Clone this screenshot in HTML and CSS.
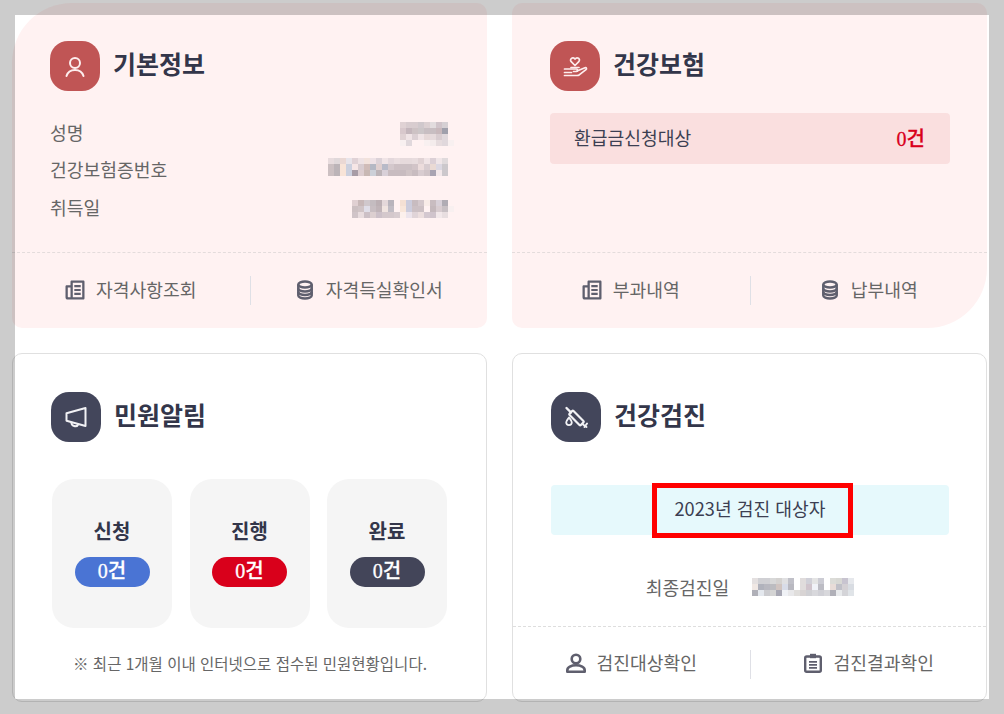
FILE: index.html
```html
<!DOCTYPE html>
<html lang="ko">
<head>
    <meta charset="UTF-8">
    <meta name="viewport" content="width=device-width, initial-scale=1.0">
    <title>나의 건강정보</title>
    <link rel="stylesheet" href="styles.css">
</head>
<body>
    <main class="cards">
        <!-- 기본정보 -->
        <section class="card card-pink card-info">
            <div class="card-body">
                <div class="card-head">
                    <span class="head-icon icon-red">
                        <svg viewBox="0 0 50 50" fill="none" stroke="#fdeeee" stroke-width="2" stroke-linecap="round">
                            <circle cx="25" cy="22" r="5"/>
                            <path d="M16.500 35c1.200-3.900 4.500-6 8.500-6s7.300 2.100 8.500 6"/>
                        </svg>
                    </span>
                    <h2>기본정보</h2>
                </div>
                <dl class="info-list">
                    <div class="info-row">
                        <dt>성명</dt>
                        <dd class="low">
                            <svg class="mosaic" width="54" height="24" viewBox="0 0 9 4">
                                <rect x="0" y="0" fill="#e0d2d4"/><rect x="1" y="0" fill="#d8cccf"/><rect x="2" y="0" fill="#d8cccf"/><rect x="3" y="0" fill="#d0c8cc"/><rect x="4" y="0" fill="#dcd0d2"/><rect x="5" y="0" fill="#e2dcde"/><rect x="6" y="0" fill="#d0c4ca"/><rect x="7" y="0" fill="#d6d0d4"/>
                                <rect x="0" y="1" fill="#d8c8cc"/><rect x="1" y="1" fill="#c4b6bc"/><rect x="2" y="1" fill="#cdc2c4"/><rect x="3" y="1" fill="#ccc6c8"/><rect x="4" y="1" fill="#c8bec2"/><rect x="5" y="1" fill="#c8bec2"/><rect x="6" y="1" fill="#c8b8bc"/><rect x="7" y="1" fill="#a0a0ac"/>
                                <rect x="0" y="2" fill="#e0d2d4"/><rect x="1" y="2" fill="#f0e4e6"/><rect x="2" y="2" fill="#dcd0d4"/><rect x="3" y="2" fill="#f0e4e6"/><rect x="4" y="2" fill="#e6d8d8"/><rect x="5" y="2" fill="#e6dadc"/><rect x="6" y="2" fill="#d8ccd0"/><rect x="7" y="2" fill="#e0d8dc"/>
                                <rect x="0" y="3" fill="#f8f0f0"/><rect x="1" y="3" fill="#e0d8dc"/><rect x="4" y="3" fill="#f8f0f0"/><rect x="5" y="3" fill="#f4ecec"/><rect x="6" y="3" fill="#e6dcde"/><rect x="7" y="3" fill="#e0d8dc"/><rect x="8" y="3" fill="#f8f0f0"/>
                            </svg>
                        </dd>
                    </div>
                    <div class="info-row">
                        <dt>건강보험증번호</dt>
                        <dd class="high">
                            <svg class="mosaic" width="126" height="18" viewBox="0 0 21 3">
                                <rect x="0" y="0" fill="#e8dcde"/><rect x="1" y="0" fill="#e0d8da"/><rect x="2" y="0" fill="#ead8d4"/><rect x="3" y="0" fill="#e8e4ea"/><rect x="4" y="0" fill="#e0d2d6"/><rect x="5" y="0" fill="#eee2e4"/><rect x="6" y="0" fill="#f2e2dc"/><rect x="7" y="0" fill="#eee2e6"/><rect x="8" y="0" fill="#dcd2d8"/><rect x="9" y="0" fill="#f0e4e6"/><rect x="10" y="0" fill="#e4d8dc"/><rect x="11" y="0" fill="#eadee0"/><rect x="12" y="0" fill="#e6dadc"/><rect x="13" y="0" fill="#e6dadc"/><rect x="14" y="0" fill="#e8dcde"/><rect x="15" y="0" fill="#e0d2d4"/><rect x="16" y="0" fill="#f0e4e6"/><rect x="17" y="0" fill="#dcd0d6"/><rect x="18" y="0" fill="#f0e6e8"/><rect x="19" y="0" fill="#e0dadc"/>
                                <rect x="0" y="1" fill="#ccc0c2"/><rect x="1" y="1" fill="#bcb4b8"/><rect x="2" y="1" fill="#f8e4d8"/><rect x="3" y="1" fill="#ccd0de"/><rect x="4" y="1" fill="#f6e6e6"/><rect x="5" y="1" fill="#d8ccd0"/><rect x="6" y="1" fill="#d0bcb8"/><rect x="7" y="1" fill="#b4b8c4"/><rect x="8" y="1" fill="#dfcfcf"/><rect x="9" y="1" fill="#b8bac8"/><rect x="10" y="1" fill="#d4c8cc"/><rect x="11" y="1" fill="#cdc0c4"/><rect x="12" y="1" fill="#ccc0c4"/><rect x="13" y="1" fill="#ccc0c4"/><rect x="14" y="1" fill="#d2c4c8"/><rect x="15" y="1" fill="#ecdcdc"/><rect x="16" y="1" fill="#d8ccd0"/><rect x="17" y="1" fill="#eadad4"/><rect x="18" y="1" fill="#dcd8e2"/><rect x="19" y="1" fill="#ccc8cc"/>
                                <rect x="0" y="2" fill="#ccc0c2"/><rect x="1" y="2" fill="#bcb4b8"/><rect x="2" y="2" fill="#f8e4d8"/><rect x="3" y="2" fill="#ccd0de"/><rect x="4" y="2" fill="#a89ca6"/><rect x="5" y="2" fill="#dccdd0"/><rect x="6" y="2" fill="#c8b8b4"/><rect x="7" y="2" fill="#ccd0d8"/><rect x="8" y="2" fill="#bcb4b8"/><rect x="9" y="2" fill="#d8d0d8"/><rect x="10" y="2" fill="#c8bcc0"/><rect x="11" y="2" fill="#c8bcc0"/><rect x="12" y="2" fill="#c8bcc0"/><rect x="13" y="2" fill="#d0c4c6"/><rect x="14" y="2" fill="#c8bcc0"/><rect x="15" y="2" fill="#d8ccd0"/><rect x="16" y="2" fill="#d0c4c8"/><rect x="17" y="2" fill="#a8a4b2"/><rect x="18" y="2" fill="#f2e8ea"/><rect x="19" y="2" fill="#ccc8cc"/>
                            </svg>
                        </dd>
                    </div>
                    <div class="info-row">
                        <dt>취득일</dt>
                        <dd class="low">
                            <svg class="mosaic" width="102" height="18" viewBox="0 0 17 3">
                                <rect x="0" y="0" fill="#e0d0d2"/><rect x="1" y="0" fill="#c8b8b8"/><rect x="2" y="0" fill="#d0c8cc"/><rect x="3" y="0" fill="#c4bcc0"/><rect x="4" y="0" fill="#bcb0b4"/><rect x="5" y="0" fill="#e4d8da"/><rect x="6" y="0" fill="#b8b4bc"/><rect x="8" y="0" fill="#f4e0d4"/><rect x="9" y="0" fill="#ccccdc"/><rect x="10" y="0" fill="#c8bcc0"/><rect x="11" y="0" fill="#d4c8cc"/><rect x="12" y="0" fill="#f8ece8"/><rect x="13" y="0" fill="#c8bcc0"/><rect x="14" y="0" fill="#d8d0d8"/><rect x="15" y="0" fill="#b0acb4"/>
                                <rect x="0" y="1" fill="#ccc0c2"/><rect x="1" y="1" fill="#d0c4c6"/><rect x="2" y="1" fill="#e0dee8"/><rect x="3" y="1" fill="#c8bec2"/><rect x="4" y="1" fill="#c0b4b8"/><rect x="5" y="1" fill="#f0e4e0"/><rect x="6" y="1" fill="#c0bcc4"/><rect x="8" y="1" fill="#f8e6da"/><rect x="9" y="1" fill="#ccccdc"/><rect x="10" y="1" fill="#ccc0c4"/><rect x="11" y="1" fill="#ccc0c4"/><rect x="13" y="1" fill="#c4b8bc"/><rect x="14" y="1" fill="#d8ccd0"/><rect x="15" y="1" fill="#c8c0c4"/><rect x="16" y="1" fill="#f8f0f0"/>
                                <rect x="0" y="2" fill="#d0c4c8"/><rect x="1" y="2" fill="#e8dcde"/><rect x="2" y="2" fill="#ccc0c6"/><rect x="3" y="2" fill="#dccfd0"/><rect x="4" y="2" fill="#ccc0c8"/><rect x="5" y="2" fill="#d4c8cc"/><rect x="6" y="2" fill="#d4c8cc"/><rect x="7" y="2" fill="#d8ccd0"/><rect x="8" y="2" fill="#fcf0ec"/><rect x="9" y="2" fill="#ece4ec"/><rect x="10" y="2" fill="#e0d4d8"/><rect x="11" y="2" fill="#ecdede"/><rect x="12" y="2" fill="#d4c8d0"/><rect x="13" y="2" fill="#d0c4cc"/><rect x="14" y="2" fill="#f2e8ea"/><rect x="15" y="2" fill="#e8dee0"/>
                            </svg>
                        </dd>
                    </div>
                </dl>
            </div>
            <div class="card-links">
                <a href="#">
                    <svg class="link-icon" viewBox="0 0 20 20"><use href="#ico-news"/></svg>
                    자격사항조회
                </a>
                <a href="#">
                    <svg class="link-icon" viewBox="0 0 20 20"><use href="#ico-db"/></svg>
                    자격득실확인서
                </a>
            </div>
        </section>

        <!-- 건강보험 -->
        <section class="card card-pink card-insure">
            <div class="card-body">
                <div class="card-head">
                    <span class="head-icon icon-red">
                        <svg viewBox="0 0 50 50" fill="none" stroke="#fdeeee" stroke-width="1.700" stroke-linecap="round" stroke-linejoin="round">
                            <path d="M25 24.500l-3.800-3.800c-2.200-2.500 1.700-5.500 3.800-2.600 2.100-2.900 6-.1 3.800 2.600z"/>
                            <path d="M21 26.500h8"/>
                            <path d="M14.500 28h12c1.500 0 1.500 2.500 0 2.500h-3"/>
                            <path d="M27 30l8-3.300c1.500-.4 2 1.200 1 2l-6.500 5c-.8.500-1.500.8-2.500.8H14.500"/>
                            <path d="M14.500 31.500h7"/>
                        </svg>
                    </span>
                    <h2>건강보험</h2>
                </div>
                <div class="refund-row">
                    <span>환급금신청대상</span>
                    <strong class="count">0건</strong>
                </div>
            </div>
            <div class="card-links">
                <a href="#">
                    <svg class="link-icon" viewBox="0 0 20 20"><use href="#ico-news"/></svg>
                    부과내역
                </a>
                <a href="#">
                    <svg class="link-icon" viewBox="0 0 20 20"><use href="#ico-db"/></svg>
                    납부내역
                </a>
            </div>
        </section>

        <!-- 민원알림 -->
        <section class="card card-line">
            <div class="card-body">
                <div class="card-head">
                    <span class="head-icon icon-dark">
                        <svg viewBox="0 0 50 50" fill="none" stroke="#f2f2f5" stroke-width="2" stroke-linejoin="round">
                            <path d="M34.500 16v18L15.500 28.800v-7.600z"/>
                            <path d="M20.500 30c-.6 4.300 5.300 5.800 7 2"/>
                        </svg>
                    </span>
                    <h2>민원알림</h2>
                </div>
                <div class="stat-list">
                    <div class="stat">
                        <h3>신청</h3>
                        <span class="pill count pill-blue">0건</span>
                    </div>
                    <div class="stat">
                        <h3>진행</h3>
                        <span class="pill count pill-red">0건</span>
                    </div>
                    <div class="stat">
                        <h3>완료</h3>
                        <span class="pill count pill-dark">0건</span>
                    </div>
                </div>
                <p class="stat-note">※ 최근 1개월 이내 인터넷으로 접수된 민원현황입니다.</p>
            </div>
        </section>

        <!-- 건강검진 -->
        <section class="card card-line">
            <div class="card-body">
                <div class="card-head">
                    <span class="head-icon icon-dark">
                        <svg viewBox="0 0 50 50" fill="none" stroke="#f2f2f5" stroke-linecap="round" stroke-linejoin="round">
                            <rect x="17.500" y="23.200" width="16" height="5.600" rx="1" transform="rotate(45 25.500 26)" stroke-width="2.200"/>
                            <path d="M20 20.500l-4.500-4.500" stroke-width="2.400"/>
                            <path d="M32 32.500l3.500 2.500M36 31.500l-2.500 3.500" stroke-width="2"/>
                            <path d="M18 25.500c-1.500 2-2.800 3.300-2.800 4.800a2.800 2.800 0 0 0 5.600 0c0-1.500-1.300-2.800-2.800-4.800z" stroke-width="1.800"/>
                        </svg>
                    </span>
                    <h2>건강검진</h2>
                </div>
                <div class="check-banner">
                    <span class="check-target">2023년 검진 대상자</span>
                </div>
                <div class="check-date">
                    <span>최종검진일</span>
                    <svg class="mosaic" width="102" height="18" viewBox="0 0 17 3">
                        <rect x="0" y="0" fill="#e4e0e0"/><rect x="1" y="0" fill="#d0d0d4"/><rect x="2" y="0" fill="#d0d0d4"/><rect x="3" y="0" fill="#d8d8d8"/><rect x="4" y="0" fill="#d4d2d0"/><rect x="5" y="0" fill="#e0e0e2"/><rect x="6" y="0" fill="#c0c0c8"/><rect x="8" y="0" fill="#e0dcdc"/><rect x="9" y="0" fill="#d0d0d8"/><rect x="10" y="0" fill="#e4e4e4"/><rect x="11" y="0" fill="#ccccd4"/><rect x="13" y="0" fill="#dcdcd8"/><rect x="14" y="0" fill="#d8d8d4"/><rect x="15" y="0" fill="#c8c4d0"/><rect x="16" y="0" fill="#e6e8ec"/>
                        <rect x="0" y="1" fill="#f0e8e4"/><rect x="1" y="1" fill="#b0b2bc"/><rect x="2" y="1" fill="#b8b8c0"/><rect x="3" y="1" fill="#bcbcc0"/><rect x="4" y="1" fill="#d0c4c0"/><rect x="5" y="1" fill="#d8dce8"/><rect x="6" y="1" fill="#b8b8c0"/><rect x="8" y="1" fill="#e0dcdc"/><rect x="9" y="1" fill="#d0c4cc"/><rect x="10" y="1" fill="#f0f2f8"/><rect x="11" y="1" fill="#bcbcc4"/><rect x="13" y="1" fill="#e8dcd8"/><rect x="14" y="1" fill="#c0c0c8"/><rect x="15" y="1" fill="#d4d0d4"/><rect x="16" y="1" fill="#d8dce2"/>
                        <rect x="0" y="2" fill="#b0b0b8"/><rect x="1" y="2" fill="#e4e8ee"/><rect x="2" y="2" fill="#ccccd0"/><rect x="3" y="2" fill="#d4d4d4"/><rect x="4" y="2" fill="#a8a8b4"/><rect x="5" y="2" fill="#f0f2f6"/><rect x="6" y="2" fill="#e8e8ea"/><rect x="7" y="2" fill="#e0dedc"/><rect x="8" y="2" fill="#d8d4d4"/><rect x="9" y="2" fill="#d0d0d4"/><rect x="10" y="2" fill="#d8d8dc"/><rect x="11" y="2" fill="#d0d0d6"/><rect x="12" y="2" fill="#d8d8dc"/><rect x="13" y="2" fill="#b0b0b8"/><rect x="14" y="2" fill="#e8eaec"/><rect x="15" y="2" fill="#d4d4d8"/><rect x="16" y="2" fill="#e0e4e8"/>
                    </svg>
                </div>
            </div>
            <div class="card-links">
                <a href="#">
                    <svg class="link-icon" viewBox="0 0 20 20" fill="none" stroke="#5f5f6e" stroke-width="2.600">
                        <circle cx="10" cy="6" r="4.300"/>
                        <path d="M1.300 18.700v-1.500c0-3 3.900-4.900 8.700-4.900s8.700 1.900 8.700 4.900v1.500z" stroke-linejoin="round"/>
                    </svg>
                    검진대상확인
                </a>
                <a href="#">
                    <svg class="link-icon" viewBox="0 0 20 20" fill="none" stroke="#5f5f6e" stroke-width="2.400">
                        <rect x="2.200" y="3.500" width="15.600" height="15.300" rx="1.500"/>
                        <path d="M7 .8h6v4.400H7z" fill="#5f5f6e" stroke="none"/>
                        <path d="M6 8.800h8M6 11.800h8M6 14.800h8" stroke-width="1.700"/>
                    </svg>
                    검진결과확인
                </a>
            </div>
        </section>
    </main>

    <!-- 공통 아이콘 -->
    <svg class="icon-defs" width="0" height="0">
        <symbol id="ico-news" viewBox="0 0 20 20">
            <path d="M5.500 1.800C5.500 1 6 .5 6.800.5h11.400c.8 0 1.300.5 1.300 1.300v16.400c0 .8-.5 1.300-1.300 1.300H2.800C1.300 19.500.5 18.700.5 17.200V6.500c0-.8.500-1.300 1.300-1.300h3.700z" fill="#5f5f6e"/>
            <path d="M7.800 2.800h9.400v14.400H7.800zM2.800 7.500h2.700v9.700H3.300c-.3 0-.5-.2-.5-.5z" fill="#fff2f2"/>
            <path d="M9.300 5h6.400v2.200H9.300zM9.300 8.900h6.400v2.200H9.300zM9.300 12.800h6.400V15H9.300z" fill="#5f5f6e"/>
        </symbol>
        <symbol id="ico-db" viewBox="0 0 20 20">
            <g fill="none" stroke="#5f5f6e" stroke-width="2.500">
                <ellipse cx="10" cy="4.500" rx="6.700" ry="3"/>
                <path d="M3.300 4.500v11c0 1.700 3 3 6.700 3s6.700-1.300 6.700-3v-11"/>
                <path d="M3.300 8.500c0 1.700 3 3 6.700 3s6.700-1.300 6.700-3M3.300 12c0 1.700 3 3 6.700 3s6.700-1.300 6.700-3"/>
            </g>
        </symbol>
    </svg>

    <div class="frame"></div>
</body>
</html>
```

FILE: styles.css
```css
html, body {
    height: 100%;
}
body {
    font-family: "Noto Sans CJK KR", "Noto Sans", sans-serif;
    background-color: white;
    color: #666;
    margin: 0;
    overflow: hidden;
}
h2, h3, p, dl, dd {
    margin: 0;
}
a {
    color: inherit;
    text-decoration: none;
}
.cards {
    display: grid;
    grid-template-columns: 475px 475px;
    grid-template-rows: 325px 349px;
    gap: 25px;
    padding: 3px 0 0 12px;
}
.card {
    display: flex;
    flex-direction: column;
    box-sizing: border-box;
    border-radius: 10px;
}
.card-pink {
    background-color: #fff2f2;
}
.card-info {
    border-top-left-radius: 60px;
}
.card-insure {
    border-bottom-right-radius: 60px;
}
.card-line {
    border: 1px solid #e0e0e0;
    background-color: white;
}
.card-body {
    flex: 1;
    padding: 38px 37px 0 38px;
}
.card-head {
    display: flex;
    align-items: center;
    gap: 13px;
    height: 50px;
}
.card-head h2 {
    font-size: 25px;
    line-height: 44px;
    font-weight: 700;
    color: #33364a;
    align-self: flex-start;
}
.head-icon {
    width: 50px;
    height: 50px;
    border-radius: 18px;
    flex: none;
}
.head-icon svg {
    display: block;
}
.icon-red {
    background-color: #c05555;
}
.icon-dark {
    background-color: #43465b;
}

/* 기본정보 */
.info-list {
    margin-top: 22px;
    font-size: 18.2px;
}
.info-row {
    display: flex;
    justify-content: space-between;
    align-items: center;
    height: 37.5px;
}
.info-row dd {
    display: flex;
    margin-right: -4px;
}
.info-row dd.low {
    margin-top: 4px;
}
.info-row dd.high {
    margin-bottom: 4px;
}
.mosaic rect {
    width: 1px;
    height: 1px;
}
.mosaic {
    shape-rendering: crispEdges;
    display: block;
}

/* 건강보험 */
.refund-row {
    display: flex;
    justify-content: space-between;
    align-items: center;
    height: 51px;
    margin-top: 22px;
    padding: 0 25px 3px 24px;
    box-sizing: border-box;
    background-color: #fadfdf;
    border-radius: 4px;
    font-size: 18.2px;
    color: #3c3f52;
}
.count {
    font-family: "Liberation Serif", "Noto Sans CJK KR", serif;
    font-weight: 500;
    font-size: 20px;
    -webkit-text-stroke: 0.3px;
}
.refund-row .count {
    color: #d9001b;
}

/* 민원알림 */
.stat-list {
    display: flex;
    justify-content: space-between;
    width: 395px;
    margin: 37px 0 0 1px;
}
.stat {
    width: 120px;
    height: 149px;
    background-color: #f5f5f5;
    border-radius: 22px;
    text-align: center;
    padding-top: 37px;
    box-sizing: border-box;
}
.stat h3 {
    font-size: 20px;
    line-height: 30px;
    font-weight: 700;
    color: #33364a;
}
.pill {
    display: block;
    width: 75px;
    height: 30px;
    line-height: 28px;
    margin: 11px auto 0;
    border-radius: 15px;
    color: white;
}
.pill-blue {
    background-color: #4a74d4;
}
.pill-red {
    background-color: #d9001b;
}
.pill-dark {
    background-color: #434559;
}
.stat-note {
    margin-top: 23px;
    font-size: 15.5px;
    line-height: 24px;
    text-align: center;
}

/* 건강검진 */
.check-banner {
    display: flex;
    justify-content: center;
    align-items: center;
    height: 50px;
    margin-top: 43px;
    background-color: #e6f9fc;
    border-radius: 4px;
}
.check-target {
    box-sizing: border-box;
    width: 201px;
    height: 55px;
    line-height: 41px;
    margin-left: 5px;
    padding-right: 5px;
    border: 5px solid red;
    text-align: center;
    font-size: 18.2px;
    color: #3c3f52;
    flex: none;
}
.check-date {
    display: flex;
    justify-content: center;
    align-items: center;
    gap: 23px;
    margin-top: 39px;
    height: 26px;
    font-size: 18.2px;
}

/* 하단 링크 */
.card-links {
    display: grid;
    grid-template-columns: 1fr 1fr;
    align-items: center;
    flex: none;
    height: 76px;
    box-sizing: border-box;
    border-top: 1px dashed #e4dcdc;
    font-size: 18.2px;
}
.card-line .card-links {
    height: 75px;
    border-top-color: #dedede;
}
.card-links a {
    display: flex;
    justify-content: center;
    align-items: center;
    gap: 11px;
    height: 25px;
    padding-bottom: 4px;
}
.card-links a + a {
    border-left: 1px solid #dfe0e6;
}
.link-icon {
    width: 20px;
    height: 20px;
    flex: none;
    margin-top: 3px;
}
.card-line .link-icon {
    margin-top: 2px;
}
.icon-defs {
    position: absolute;
}

/* 바깥 회색 테두리 */
.frame {
    position: absolute;
    top: 0;
    left: 0;
    right: 0;
    bottom: 0;
    border: 15px solid rgba(0, 0, 0, 0.2);
    pointer-events: none;
}
```
